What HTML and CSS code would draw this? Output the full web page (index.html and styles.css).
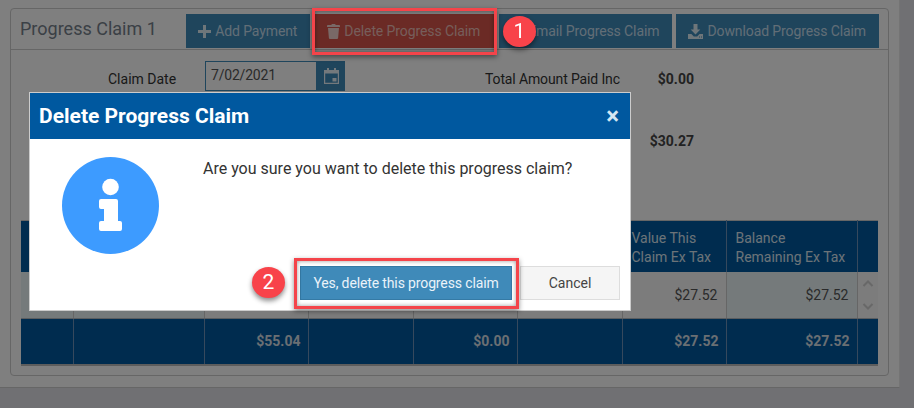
FILE: index.html
```html
<!DOCTYPE html>
<html lang="en">
<head>
  <meta charset="UTF-8">
  <title>Delete Progress Claim</title>
  <link rel="stylesheet" href="styles.css">
</head>
<body>
  <div class="page">
    <div class="panel">
      <div class="panel-head">
        <h2 class="panel-title">Progress Claim 1</h2>
        <div class="actions">
          <button class="btn btn-add">
            <svg class="ico" viewBox="0 0 13 13"><path d="M5 0h3v5h5v3H8v5H5V8H0V5h5z"/></svg>Add Payment
          </button>
          <button class="btn btn-delete">
            <svg class="ico ico-trash" viewBox="0 0 13 15"><path d="M0 1.800 Q0 1 1 1h3.200L5 0h3l.8 1H12q1 0 1 .8V3H0zM1 4h11l-.9 10q-.1 1-1.100 1H3q-1 0-1.100-1z"/></svg>Delete Progress Claim
          </button>
          <button class="btn btn-email">
            <svg class="ico" viewBox="0 0 13 13"><path d="M0 2h13v1.400L6.500 7.500 0 3.400zM0 5l6.500 4.100L13 5v6H0z"/></svg>Email Progress Claim
          </button>
          <button class="btn btn-download">
            <svg class="ico ico-dl" viewBox="0 0 15 15"><path fill-rule="evenodd" d="M5.500 0h4v5.500h2.800L7.500 10.500 2.700 5.500h2.800zM0 10h3.400l2.400 2.400h3.400L11.600 10H15v5H0zM11 12.500v1h1v-1zM13 12.500v1h1v-1z"/></svg>Download Progress Claim
          </button>
        </div>
      </div>

      <div class="panel-body">
        <div class="summary">
          <div class="date-field">
            <label class="date-label">Claim Date</label>
            <div class="date-input">7/02/2021</div>
            <div class="date-btn">
              <svg viewBox="0 0 15 16" width="15" height="16"><path fill-rule="evenodd" d="M3 0h2v2h5V0h2v2h3v14H0V2h3zM1.200 5.500v9.300h12.600V5.500zM8.500 10H12.500v3.500H8.500z"/></svg>
            </div>
          </div>
          <div class="totals">
            <div class="total-row">
              <span class="total-label">Total Amount Paid Inc</span>
              <b class="total-value">$0.00</b>
            </div>
            <div class="total-row">
              <span class="total-label"></span>
              <b class="total-value">$30.27</b>
            </div>
          </div>
        </div>

        <table class="claims">
          <colgroup>
            <col class="c1"><col class="c2"><col class="c3"><col class="c4"><col class="c5">
            <col class="c6"><col class="c7"><col class="c8"><col class="c9">
          </colgroup>
          <thead>
            <tr>
              <th></th><th></th><th></th><th></th><th></th><th></th>
              <th>Value This<br>Claim Ex Tax</th>
              <th>Balance<br>Remaining Ex Tax</th>
              <th></th>
            </tr>
          </thead>
          <tbody>
            <tr>
              <td class="shade"></td><td class="shade"></td><td></td><td></td><td></td><td></td>
              <td class="num">$27.52</td>
              <td class="num shade">$27.52</td>
              <td class="scroll-cell">
                <svg viewBox="0 0 12 32" width="12" height="32"><path d="M1.500 7 6 2.500 10.500 7M1.500 25 6 29.500 10.500 25"/></svg>
              </td>
            </tr>
          </tbody>
          <tfoot>
            <tr>
              <td></td><td></td>
              <td class="num">$55.04</td>
              <td></td>
              <td class="num">$0.00</td>
              <td></td>
              <td class="num">$27.52</td>
              <td class="num">$27.52</td>
              <td></td>
            </tr>
          </tfoot>
        </table>
      </div>
    </div>
  </div>

  <div class="overlay"></div>

  <div class="modal">
    <div class="modal-head">
      <h3 class="modal-title">Delete Progress Claim</h3>
      <span class="modal-close">&times;</span>
    </div>
    <div class="modal-body">
      <div class="info-icon">
        <svg viewBox="0 0 97 97" width="97" height="97">
          <circle cx="48.500" cy="48.500" r="48.500" fill="#3d9bff"/>
          <circle cx="48.500" cy="30" r="8.300" fill="#fff"/>
          <path fill="#fff" d="M39 42h15a2 2 0 0 1 2 2v20h2a2 2 0 0 1 2 2v6a2 2 0 0 1-2 2H39a2 2 0 0 1-2-2v-6a2 2 0 0 1 2-2h3V52h-3a2 2 0 0 1-2-2v-6a2 2 0 0 1 2-2z"/>
        </svg>
      </div>
      <div class="modal-main">
        <p class="modal-text">Are you sure you want to delete this progress claim?</p>
        <div class="modal-actions">
          <button class="btn-yes">Yes, delete this progress claim</button>
          <button class="btn-cancel">Cancel</button>
        </div>
      </div>
    </div>
  </div>

  <div class="mark mark-delete"></div>
  <div class="mark mark-yes"></div>
  <div class="step step-1">1</div>
  <div class="step step-2">2</div>
</body>
</html>
```

FILE: styles.css
```css
* {
  box-sizing: border-box;
}
html, body {
  height: 100%;
}
body {
  margin: 0;
  overflow: hidden;
  background: #e0e1e6;
  font-family: Roboto, sans-serif;
  font-size: 14px;
  color: #333;
}

/* page behind the dialog */
.page {
  width: 900px;
  height: 388px;
  padding: 8px 10px 11px;
  background: #fff;
  border-right: 1px solid #e8e8e8;
  border-bottom: 1px solid #ccc;
}
.panel {
  height: 100%;
  border: 1px solid #ccc;
  border-radius: 4px;
}
.panel-head {
  display: flex;
  justify-content: space-between;
  height: 41px;
  padding: 5px 9px 0 9px;
  border-bottom: 1px solid #ccc;
}
.panel-title {
  margin: 0;
  font-size: 18px;
  font-weight: 400;
  line-height: 30px;
  color: #76818c;
}
.actions {
  display: flex;
  gap: 4px;
}
.btn {
  display: flex;
  align-items: center;
  gap: 4px;
  height: 34px;
  padding: 0 13px 0 12px;
  border: none;
  background: #3f8ab9;
  color: #c4dcec;
  font: 14px Roboto, sans-serif;
  letter-spacing: -.1px;
}
.btn-delete {
  padding: 0 15px 0 13px;
  background: #d6554a;
  color: #ecbcb6;
}
.ico {
  width: 13px;
  height: 13px;
  fill: #dcecf5;
}
.btn-delete .ico {
  fill: #f2d3cf;
}
.ico-trash {
  height: 15px;
}
.ico-dl {
  width: 15px;
  height: 15px;
}

.panel-body {
  padding: 11px 10px 0;
}
.summary {
  display: flex;
  height: 159px;
}
.date-field {
  display: flex;
  align-items: flex-start;
  width: 464px;
}
.date-label {
  width: 184px;
  padding: 10px 0 0 87px;
  white-space: nowrap;
}
.date-input {
  width: 112px;
  height: 30px;
  padding: 5px 0 0 5px;
  background: #fff;
  border: 1px solid #3f8ab9;
  color: #555;
  letter-spacing: -.2px;
}
.date-btn {
  display: flex;
  align-items: center;
  justify-content: center;
  width: 28px;
  height: 30px;
  background: #3f8ab9;
  fill: #e8f2f8;
}
.totals {
  display: flex;
  flex-direction: column;
  gap: 44px;
  padding-top: 10px;
}
.total-row {
  display: flex;
  width: 209px;
  height: 18px;
  justify-content: space-between;
}
.total-label {
  letter-spacing: -.13px;
}
.total-value {
  font-weight: 700;
  color: #444;
}

.claims {
  width: 857px;
  height: 145px;
  table-layout: fixed;
  border-collapse: collapse;
  border-top: 1px solid #ccc;
  border-bottom: 2px solid #bbb;
}
.c1 { width: 52px; }
.c2 { width: 131px; }
.c3 { width: 104px; }
.c4 { width: 105px; }
.c5 { width: 104px; }
.c6 { width: 105px; }
.c7 { width: 104px; }
.c8 { width: 131px; }
.c9 { width: 21px; }
.claims th {
  height: 51px;
  padding: 8px 9px 0;
  background: #00589f;
  border-right: 1px solid #6c93bb;
  color: #d9e6f0;
  font-weight: 400;
  line-height: 19px;
  text-align: left;
  white-space: nowrap;
  vertical-align: top;
}
.claims tbody td {
  height: 47px;
  background: #f8f8f8;
  border-right: 1px solid #ccc;
  border-bottom: 1px solid #b4bac0;
}
.claims tfoot td {
  height: 46px;
  padding-top: 1px;
  background: #00589f;
  border-right: 1px solid #6c93bb;
  color: #d4dee6;
  font-weight: 700;
}
.claims th:last-child, .claims td:last-child {
  border-right: none;
}
.claims .num {
  padding-right: 7px;
  text-align: right;
}
.claims tbody .num {
  padding-right: 8px;
  color: #555;
}
.claims tbody .shade {
  background: #ebf5f6;
}
.claims .scroll-cell {
  padding: 0 0 0 4px;
}
.scroll-cell svg {
  display: block;
  fill: none;
  stroke: #d0d0d0;
  stroke-width: 2;
}

/* dialog layer */
.overlay {
  position: fixed;
  inset: 0;
  background: rgba(0, 0, 0, .5);
}
.modal {
  position: absolute;
  left: 29px;
  top: 92px;
  width: 602px;
  height: 219px;
  display: flex;
  flex-direction: column;
  background: #fff;
  border: 1px solid #ccc;
}
.modal-head {
  display: flex;
  align-items: center;
  justify-content: space-between;
  height: 46px;
  padding: 0 11px 0 9px;
  background: #00589f;
  color: #fff;
}
.modal-title {
  margin: 0;
  font-size: 21px;
  font-weight: 700;
}
.modal-close {
  color: #d5e6f3;
  font-size: 24px;
  font-weight: 700;
  line-height: 1;
}
.modal-body {
  display: flex;
  flex: 1;
}
.info-icon {
  padding: 18px 0 0 32px;
  width: 173px;
}
.info-icon svg {
  display: block;
}
.modal-main {
  display: flex;
  flex: 1;
  flex-direction: column;
  justify-content: space-between;
}
.modal-text {
  margin: 0;
  padding-top: 20px;
  font-size: 16px;
  line-height: 19px;
  color: #333;
}
.modal-actions {
  display: flex;
  justify-content: flex-end;
  gap: 8px;
  padding: 0 10px 10px 0;
}
.btn-yes, .btn-cancel {
  height: 34px;
  font: 14px Roboto, sans-serif;
}
.btn-yes {
  width: 212px;
  background: #3f8ab9;
  border: 1px solid #357aa5;
  color: #eaf3f9;
  letter-spacing: -.13px;
}
.btn-cancel {
  width: 100px;
  background: #f5f5f5;
  border: 1px solid #ddd;
  color: #444;
}

/* callouts drawn over the screenshot */
.mark {
  position: absolute;
  border: 3px solid #f4444a;
  box-shadow: 0 2px 5px rgba(0, 0, 0, .45), inset 0 0 4px rgba(0, 0, 0, .4);
}
.mark-delete {
  left: 312px;
  top: 8px;
  width: 185px;
  height: 47px;
}
.mark-yes {
  left: 294px;
  top: 258px;
  width: 225px;
  height: 51px;
}
.step {
  position: absolute;
  width: 33px;
  height: 31px;
  border-radius: 50%;
  background: #f8434a;
  box-shadow: 0 3px 5px rgba(0, 0, 0, .45);
  color: #fff;
  font-size: 21px;
  line-height: 31px;
  text-align: center;
}
.step-1 {
  left: 503px;
  top: 16px;
}
.step-2 {
  left: 252px;
  top: 267px;
}
```
